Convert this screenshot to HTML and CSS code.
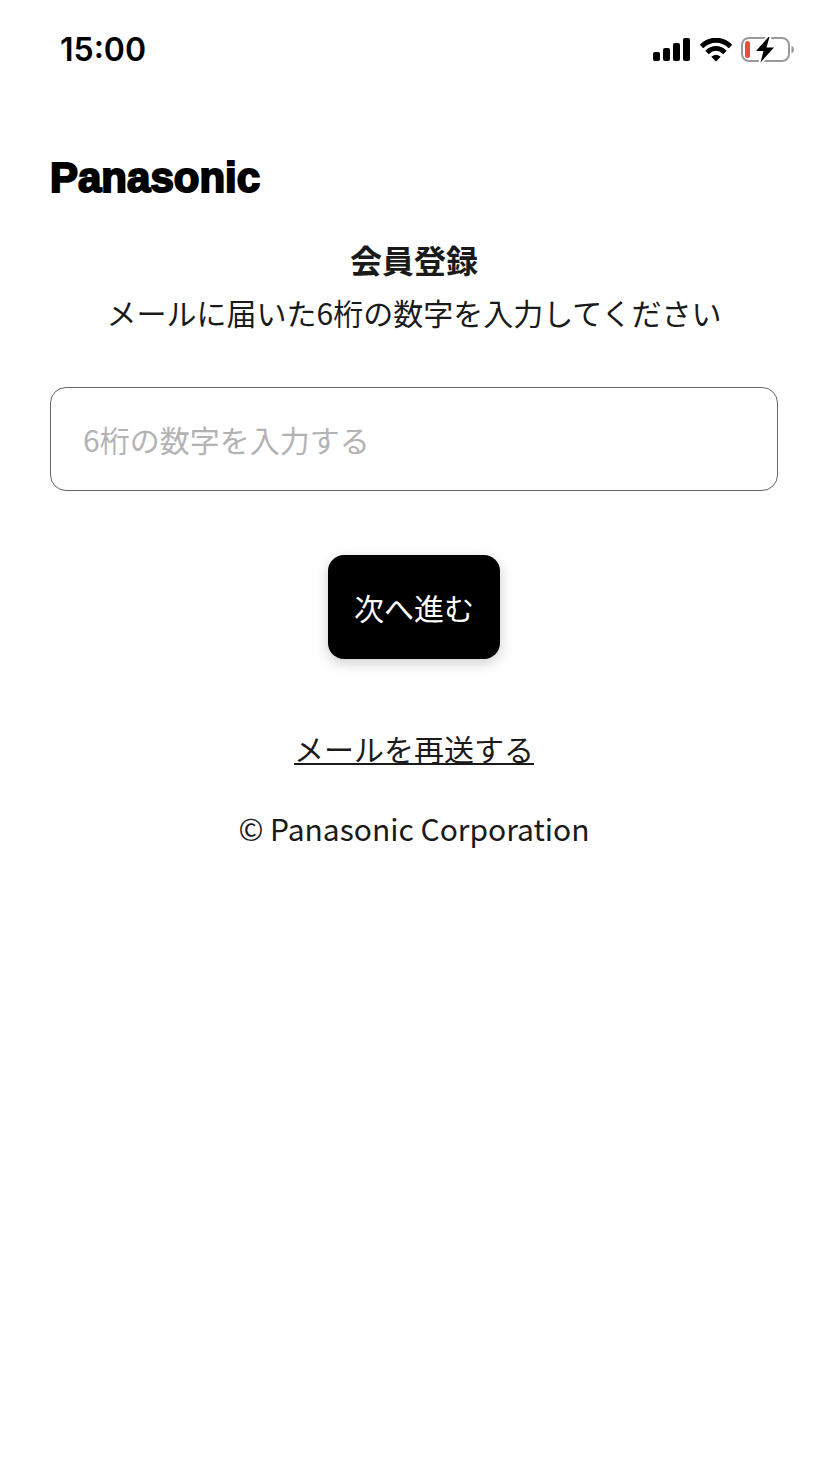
FILE: index.html
```html
<!doctype html>
<html lang="ja">

<head>
    <meta charset="utf-8">
    <meta name="viewport" content="width=device-width, initial-scale=1">
    <title>会員登録</title>
    <link rel="stylesheet" href="styles.css">
</head>

<body>

    <div class="status-bar">
        <span class="time">15:00</span>
        <div class="status-icons">
            <svg class="signal" width="38" height="24" viewBox="0 0 38 24">
                <rect x="0" y="14" width="7" height="9" rx="2" />
                <rect x="10" y="10" width="7" height="13" rx="2" />
                <rect x="20" y="5" width="7" height="18" rx="2" />
                <rect x="30" y="0" width="7" height="23" rx="2" />
            </svg>
            <svg class="wifi" width="32" height="24" viewBox="0 0 32 24">
                <path class="arc" d="M1.5 8.5C10 .2 22 .2 30.5 8.5" />
                <path class="arc" d="M7 14.5C12.5 9.3 19.5 9.3 25 14.5" />
                <path d="M11.3 18.8C14 16.3 18 16.3 20.7 18.8L16 23.5Z" />
            </svg>
            <svg class="battery" width="54" height="28" viewBox="0 0 54 28">
                <rect class="case" x="1" y="2" width="47" height="23" rx="7" />
                <path class="tip" d="M50.5 9.5Q53 11 53 13.5T50.5 17.5Z" />
                <rect class="level" x="4" y="5" width="5" height="17" rx="2.5" />
                <path class="bolt" d="M27.5 1L15 15H22.5L19.5 26.5L33 11.5H25.5L28.5 1Z" />
            </svg>
        </div>
    </div>

    <main>
        <div class="logo">Panasonic</div>

        <h1>会員登録</h1>
        <p class="lead"><label for="code">メールに届いた6桁の数字を入力してください</label></p>

        <form>
            <input class="code" id="code" type="text" inputmode="numeric" maxlength="6" placeholder="6桁の数字を入力する">
            <button class="next" type="submit">次へ進む</button>
        </form>

        <a class="resend" href="#">メールを再送する</a>
    </main>

    <footer>© Panasonic Corporation</footer>

</body>

</html>
```
FILE: styles.css
```css
* {
    box-sizing: border-box;
}

body {
    margin: 0;
    background-color: #fff;
    color: #1a1a1a;
    font-family: "Noto Sans CJK JP", sans-serif;
    font-size: 30px;
    line-height: 48px;
}

.status-bar {
    display: flex;
    align-items: center;
    justify-content: space-between;
    height: 100px;
    padding: 0 33px 0 60px;
    color: #000;
}

.time {
    font-family: Inter, sans-serif;
    font-size: 32px;
    font-weight: 600;
}

.status-icons {
    display: flex;
    align-items: center;
    gap: 9px;
}

.arc {
    fill: none;
    stroke: #000;
    stroke-width: 5;
}

.case {
    fill: none;
    stroke: #999;
    stroke-width: 2;
}

.tip {
    fill: #999;
}

.level {
    fill: #eb4d3d;
}

.bolt {
    stroke: #fff;
    stroke-width: 4;
    paint-order: stroke;
}

main {
    display: flex;
    flex-direction: column;
    align-items: center;
    padding: 54px 50px 0;
}

.logo {
    align-self: flex-start;
    color: #000;
    font-family: "Liberation Sans", Arial, sans-serif;
    font-size: 42px;
    font-weight: 700;
    -webkit-text-stroke: 2px #000;
}

h1 {
    margin: 33px 0 0;
    font-size: 32px;
    font-weight: 700;
}

.lead {
    margin: 5px 0 0;
}

form {
    display: flex;
    flex-direction: column;
    align-items: center;
    gap: 64px;
    width: 100%;
    margin-top: 51px;
}

.code {
    width: 100%;
    height: 104px;
    padding: 0 32px;
    border: 1px solid #666;
    border-radius: 16px;
    background: #fff;
    color: inherit;
    font: inherit;
}

.code::placeholder {
    color: #b3b3b3;
    opacity: 1;
}

.next {
    height: 104px;
    padding: 0 26px;
    border: none;
    border-radius: 16px;
    background: #000;
    box-shadow: 0 4px 14px rgba(0, 0, 0, .2);
    color: #fff;
    font: inherit;
    cursor: pointer;
}

.resend {
    margin-top: 65px;
    color: inherit;
    text-decoration: underline;
    text-decoration-thickness: 2px;
    text-underline-offset: 2px;
    text-decoration-skip-ink: none;
}

footer {
    padding: 32px 50px;
    text-align: center;
}
```
